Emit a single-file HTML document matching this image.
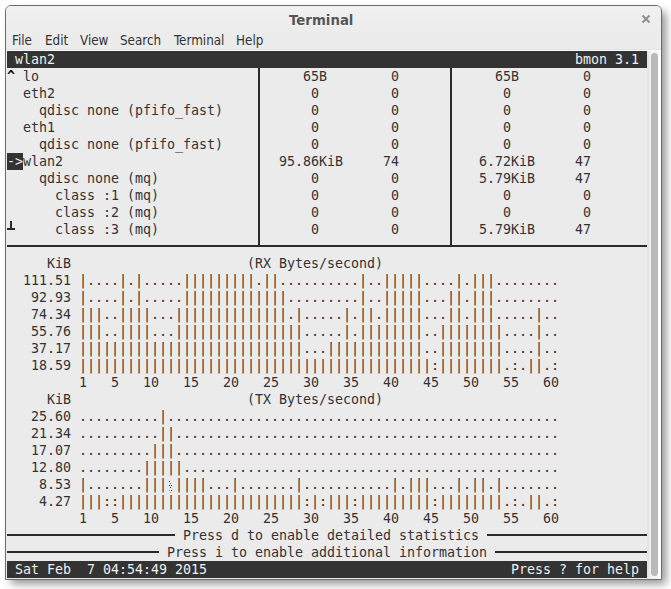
<!DOCTYPE html>
<html><head><meta charset="utf-8"><title>Terminal</title>
<style>
html,body{margin:0;padding:0;background:#fff;}
body{width:671px;height:589px;position:relative;overflow:hidden;}
#win{position:absolute;left:5px;top:5px;width:655px;height:573px;border:1px solid #6b6b6b;border-radius:6px 6px 0 0;background:#ebebeb;box-shadow:5px 5px 8px -1px rgba(0,0,0,.42);}
#title{position:absolute;left:6px;top:6px;width:655px;height:26px;border-radius:5px 5px 0 0;background:linear-gradient(#f1f1f1,#ececec);}
#title span{position:absolute;left:283px;top:7px;font:bold 13.33px "DejaVu Sans","Liberation Sans",sans-serif;color:#555;text-shadow:0 1px 0 rgba(255,255,255,.8);}
#close{position:absolute;left:640px;top:13px;width:12px;height:12px;}
#menu{position:absolute;left:6px;top:32px;width:655px;height:19px;background:linear-gradient(#ececec 0,#ececec 17px,#e1e1e1 17px,#e1e1e1 18px,#fbfbfb 18px);}
#menu span{position:absolute;top:1px;font:13.33px "DejaVu Sans","Liberation Sans",sans-serif;font-stretch:condensed;color:#333;}
#term{position:absolute;left:7px;top:51px;width:640px;height:527px;background:#ebebeb;}
#sb{position:absolute;left:647px;top:51px;width:14px;height:528px;background:linear-gradient(90deg,#e3e3e3 0,#e6e6e6 2px,#f2f2f2 3px,#f4f4f4 10px,#fdfdfd 11px);}
#sb i{position:absolute;left:4px;top:2px;width:7px;height:523px;border-radius:4px;background:#b9b9b9;}
pre.r{position:absolute;left:7px;margin:0;height:17px;line-height:17px;font:13.3px/17px "DejaVu Sans Mono","Liberation Mono",monospace;letter-spacing:-0.0055px;color:#333;white-space:pre;}
pre.r b{font-weight:bold;color:#0c0c0c}
pre.inv{width:640px;background:#333;color:#f0f0f0;}
.sel{background:#333;color:#f0f0f0;display:inline-block;height:17px;}
.ln{position:absolute;background:#2a2a2a;}
.px{position:absolute;width:1px;height:1px;}
</style></head><body>
<div id="win"></div>
<div id="title"><span>Terminal</span></div>
<svg id="close" viewBox="0 0 12 12"><path d="M2.5 2.5 L9.5 9.5 M9.5 2.5 L2.5 9.5" stroke="#8e8e8e" stroke-width="1.9" fill="none"/></svg>
<div id="menu"><span style="left:6px">File</span><span style="left:39px">Edit</span><span style="left:74px">View</span><span style="left:114px">Search</span><span style="left:168px">Terminal</span><span style="left:230px">Help</span></div>
<div id="term"></div>
<div id="sb"><i></i></div>
<pre class="r inv" style="top:51px"> wlan2                                                                 bmon 3.1</pre>
<pre class="r" style="top:68px"><b>^</b> lo                                 65B        0            65B        0</pre>
<pre class="r" style="top:85px">  eth2                                0         0             0         0</pre>
<pre class="r" style="top:102px">    qdisc none (pfifo_fast)           0         0             0         0</pre>
<pre class="r" style="top:119px">  eth1                                0         0             0         0</pre>
<pre class="r" style="top:136px">    qdisc none (pfifo_fast)           0         0             0         0</pre>
<pre class="r" style="top:153px"><span class="sel">-&gt;</span>wlan2                           95.86KiB     74          6.72KiB     47</pre>
<pre class="r" style="top:170px">    qdisc none (mq)                   0         0          5.79KiB     47</pre>
<pre class="r" style="top:187px">      class :1 (mq)                   0         0             0         0</pre>
<pre class="r" style="top:204px">      class :2 (mq)                   0         0             0         0</pre>
<pre class="r" style="top:221px">      class :3 (mq)                   0         0          5.79KiB     47</pre>
<pre class="r" style="top:255px">     KiB                      (RX Bytes/second)</pre>
<pre class="r" style="top:272px">  111.51 |....|.|.....|||||||||.||..........|..|||||....|.|||........</pre>
<pre class="r" style="top:289px">   92.93 |....|.|.....|||||||||||||.........|..|||||...||.|||........</pre>
<pre class="r" style="top:306px">   74.34 |||..||||...||||||||||||||.|.....|.||.|||||...||.|||.....|..</pre>
<pre class="r" style="top:323px">   55.76 |||..||||...||||||||||||||||.....|.||||||||..||||||||....|..</pre>
<pre class="r" style="top:340px">   37.17 ||||||||||||||||||||||||||||...||||||||||||..||||||||....|..</pre>
<pre class="r" style="top:357px">   18.59 ||||||||||||||||||||||||||||||||||||||||||||:||||||||.:.||.:</pre>
<pre class="r" style="top:374px">         1   5   10   15   20   25   30   35   40   45   50   55   60</pre>
<pre class="r" style="top:391px">     KiB                      (TX Bytes/second)</pre>
<pre class="r" style="top:408px">   25.60 ..........|.................................................</pre>
<pre class="r" style="top:425px">   21.34 ..........||................................................</pre>
<pre class="r" style="top:442px">   17.07 .........|||................................................</pre>
<pre class="r" style="top:459px">   12.80 ........|||||...............................................</pre>
<pre class="r" style="top:476px">    8.53 |.......||| ||||...|.......|...........|.|||...|.||.|.......</pre>
<pre class="r" style="top:493px">    4.27 |||::|||||||||||||||||||||||:|:|||:|||||||||:||||||||.:.||.:</pre>
<pre class="r" style="top:510px">         1   5   10   15   20   25   30   35   40   45   50   55   60</pre>
<pre class="r" style="top:527px">                      Press d to enable detailed statistics</pre>
<pre class="r" style="top:544px">                    Press i to enable additional information</pre>
<pre class="r inv" style="top:561px"> Sat Feb  7 04:54:49 2015                                      Press ? for help</pre>
<div class="ln" style="left:7px;top:245px;width:640px;height:2px"></div>
<div class="ln" style="left:258px;top:68px;width:2px;height:178px"></div>
<div class="ln" style="left:450px;top:68px;width:2px;height:178px"></div>
<div class="ln" style="left:7px;top:534px;width:168px;height:2px"></div>
<div class="ln" style="left:487px;top:534px;width:160px;height:2px"></div>
<div class="ln" style="left:7px;top:551px;width:152px;height:2px"></div>
<div class="ln" style="left:495px;top:551px;width:152px;height:2px"></div>
<div class="ln" style="left:7px;top:228px;width:8px;height:2px"></div>
<div class="ln" style="left:10px;top:221px;width:2px;height:8px"></div>
<i class="px" style="left:169px;top:481px;background:#2a2a2a"></i><i class="px" style="left:170px;top:483px;background:#3a78c0"></i><i class="px" style="left:169px;top:485px;background:#2a2a2a"></i><i class="px" style="left:171px;top:485px;background:#2a2a2a"></i><i class="px" style="left:170px;top:487px;background:#2a2a2a"></i><i class="px" style="left:172px;top:488px;background:#bfe0ee"></i><i class="px" style="left:169px;top:490px;background:#d08a3a"></i><i class="px" style="left:171px;top:490px;background:#2a2a2a"></i><i class="px" style="left:170px;top:492px;background:#e0a040"></i>
</body></html>
